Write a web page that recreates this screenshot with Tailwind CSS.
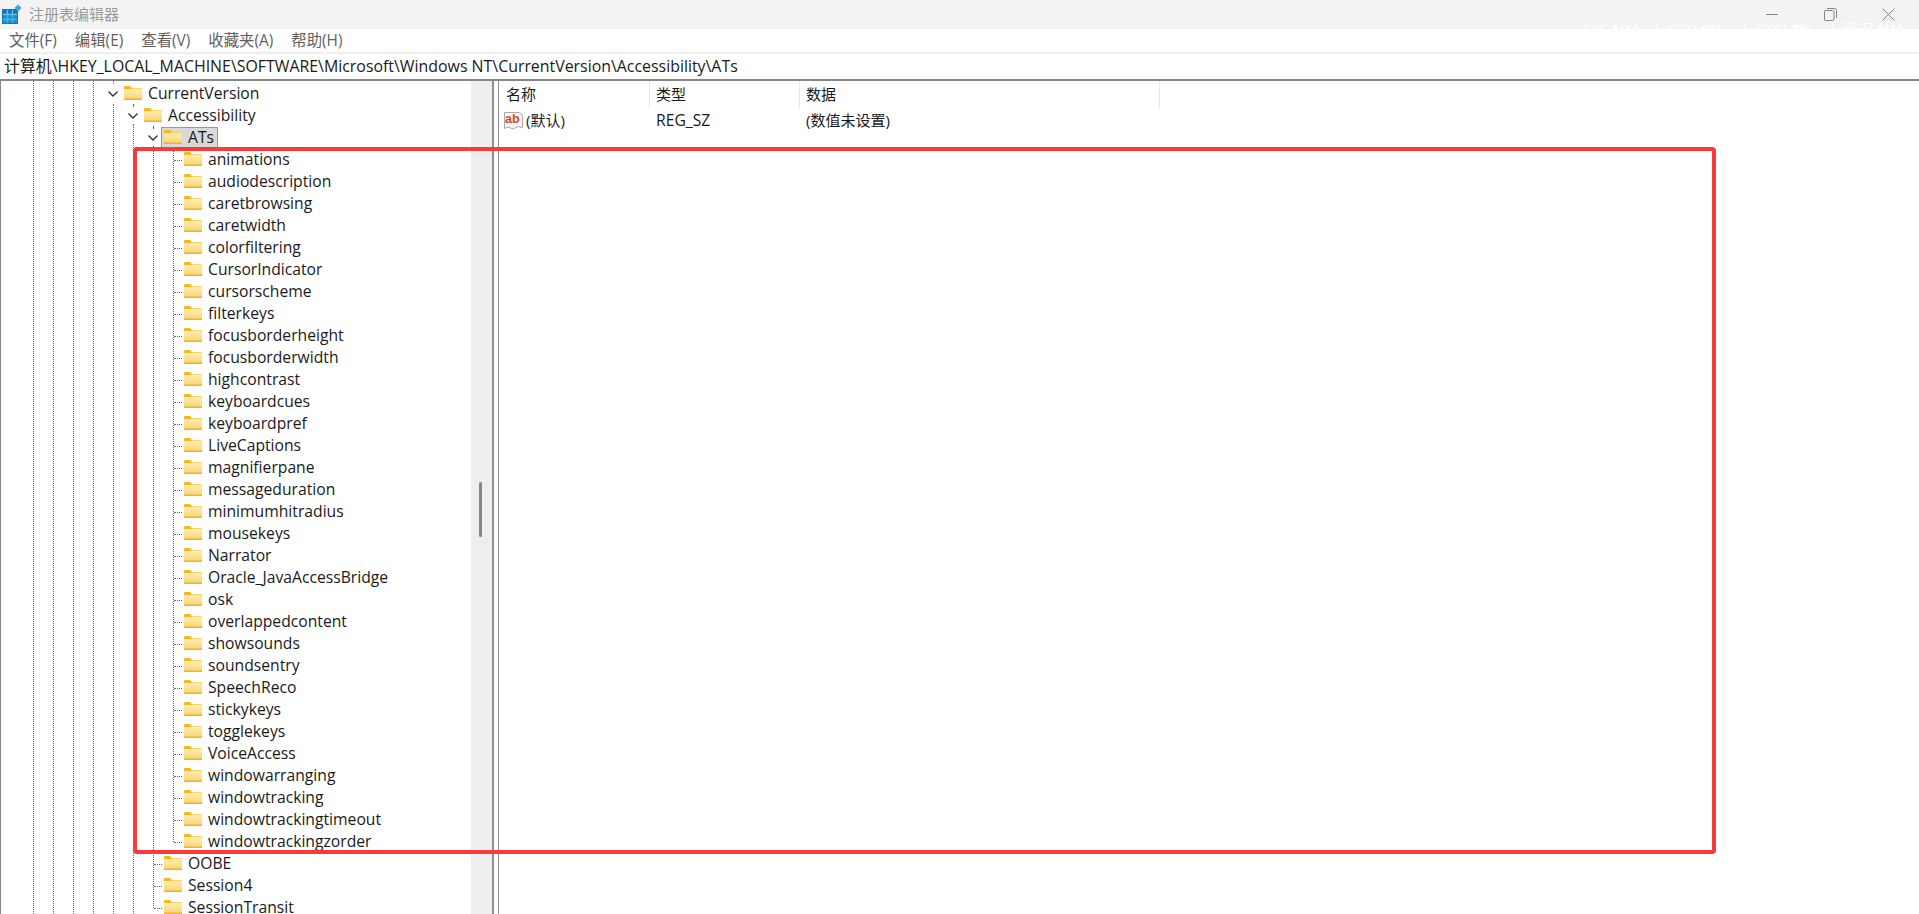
<!DOCTYPE html>
<html lang="zh-CN">
<head>
  <meta charset="UTF-8" />
  <title>注册表编辑器</title>
  <script src="https://cdn.jsdelivr.net/npm/@tailwindcss/browser@4"></script>
</head>
<body class="bg-white text-[#1a1a1a] overflow-hidden font-['Open_Sans','Noto_Sans_CJK_SC',sans-serif]">
  <svg class="absolute h-0 w-0">
    <defs>
      <linearGradient id="fill" x1="0" y1="0" x2="0" y2="1">
        <stop offset="0" stop-color="#fdeeb8"/>
        <stop offset="1" stop-color="#fcd468"/>
      </linearGradient>
    </defs>
    <symbol id="folder" viewBox="0 0 18 14">
      <path d="M0 1 Q0 0 1 0 H6 L8 2 H18 V5 H0Z" fill="#f8b81c"/>
      <path d="M0 3 H7 L8 2.500 H18 V14 H0Z" fill="url(#fill)"/>
      <path d="M0 13.250 H18" stroke="#eeb033" stroke-width="1.500"/>
    </symbol>
  </svg>

  <div class="relative h-[914px] w-[1919px] overflow-hidden">
    <!-- title bar -->
    <div class="relative flex h-[29px] items-center bg-[#f3f3f3]">
      <svg class="ml-[2px] h-[22px] w-[20px]" viewBox="0 0 20 22">
        <rect x="0" y="5" width="16" height="15" fill="#0f78bb"/>
        <path d="M1 10.500H15M1 15.500H15M5.500 6V19M10.500 6V19" stroke="#66c3ee" stroke-width="1.300"/>
        <rect x="1" y="11" width="14" height="8" fill="#2ea3dc" opacity="0.500"/>
        <path d="M16 0.500l3.500 3.500-3.500 3.500-3.500-3.500z" fill="#3aa6d8"/>
      </svg>
      <span class="ml-[7px] text-[15px] text-[#9a9a9a]">注册表编辑器</span>
      <div class="absolute left-[1583px] top-[18px] flex items-center text-[15px] text-white whitespace-nowrap">
        <span class="w-[70px]">FPS <b>N/A</b></span><span class="w-[15px]">|</span>
        <span class="w-[73px]">CPU <b>0%</b></span><span class="w-[15px]">|</span>
        <span class="w-[73px]">GPU <b>7%</b></span><span class="w-[14px]">|</span>
        <span>延迟 <b>N/A</b></span>
      </div>
      <div class="absolute right-0 top-0 mr-[2px] flex h-[29px] text-[#858585]">
        <div class="flex w-[58px] items-center justify-center">
          <svg class="h-[12px] w-[12px]" viewBox="0 0 12 12"><path d="M0 5.500H12" stroke="currentColor"/></svg>
        </div>
        <div class="flex w-[58px] items-center justify-center">
          <svg class="h-[13px] w-[13px]" viewBox="0 0 13 13" fill="none" stroke="currentColor"><rect x="0.500" y="2.500" width="9.500" height="10" rx="1.500"/><path d="M3 0.500H10.500Q12.500 .5 12.500 2.500V10"/></svg>
        </div>
        <div class="flex w-[58px] items-center justify-center">
          <svg class="h-[13px] w-[13px]" viewBox="0 0 13 13" stroke="currentColor"><path d="M0.500 0.500L12.500 12.500M12.500 0.500L0.500 12.500"/></svg>
        </div>
      </div>
    </div>

    <!-- menu -->
    <div class="flex h-[23px] items-center pl-[9px] text-[15.4px] text-[#5f5f5f]">
      <span class="mr-[18px]">文件(F)</span>
      <span class="mr-[18px]">编辑(E)</span>
      <span class="mr-[18px]">查看(V)</span>
      <span class="mr-[18px]">收藏夹(A)</span>
      <span>帮助(H)</span>
    </div>
    <div class="h-[2px] bg-[#f0f0f0]"></div>

    <!-- address bar -->
    <div class="flex h-[25px] items-center pl-[4px] text-[15.9px] leading-none">计算机\HKEY_LOCAL_MACHINE\SOFTWARE\Microsoft\Windows NT\CurrentVersion\Accessibility\ATs</div>
    <div class="h-[2px] bg-[#83868b]"></div>

    <div class="flex h-[833px]">
      <!-- tree -->
      <div class="relative w-[492px] shrink-0 overflow-hidden border-l border-[#83868b] text-[15.7px]">
        <div class="absolute inset-y-0 left-[32px] border-l border-dotted border-[#666]"></div>
        <div class="absolute inset-y-0 left-[52px] border-l border-dotted border-[#666]"></div>
        <div class="absolute inset-y-0 left-[72px] border-l border-dotted border-[#666]"></div>
        <div class="absolute inset-y-0 left-[92px] border-l border-dotted border-[#666]"></div>
        <div class="absolute top-0 left-[112px] h-[3px] border-l border-dotted border-[#666]"></div>
        <div class="absolute top-[23px] left-[112px] bottom-0 border-l border-dotted border-[#666]"></div>
        <div class="absolute top-[23px] left-[132px] h-[2px] border-l border-dotted border-[#666]"></div>
        <div class="absolute top-[43px] left-[132px] bottom-0 border-l border-dotted border-[#666]"></div>
        <div class="absolute top-[45px] left-[152px] h-[2px] border-l border-dotted border-[#666]"></div>
        <div class="absolute top-[65px] left-[152px] h-[762px] border-l border-dotted border-[#666]"></div>
        <div class="absolute top-[67px] left-[172px] h-[694px] border-l border-dotted border-[#666]"></div>

        <div class="relative pt-[2px]">
          <div class="flex h-[22px] items-center pl-[106px]">
            <svg class="mb-[2px] mr-[5px] h-[12px] w-[12px]" viewBox="0 0 12 12" fill="none" stroke="#333" stroke-width="1.400"><path d="M1.500 4.500L6 9L10.500 4.500"/></svg>
            <svg class="mb-[2px] mr-[6px] h-[14px] w-[18px]"><use href="#folder"/></svg>CurrentVersion
          </div>
          <div class="flex h-[22px] items-center pl-[126px]">
            <svg class="mb-[2px] mr-[5px] h-[12px] w-[12px]" viewBox="0 0 12 12" fill="none" stroke="#333" stroke-width="1.400"><path d="M1.500 4.500L6 9L10.500 4.500"/></svg>
            <svg class="mb-[2px] mr-[6px] h-[14px] w-[18px]"><use href="#folder"/></svg>Accessibility
          </div>
          <div class="flex h-[22px] items-center pl-[146px]">
            <svg class="mb-[2px] mr-[2px] h-[12px] w-[12px]" viewBox="0 0 12 12" fill="none" stroke="#333" stroke-width="1.400"><path d="M1.500 4.500L6 9L10.500 4.500"/></svg>
            <div class="flex h-[22px] items-center border border-[#999] bg-[#d9d9d9] pl-[2px] pr-[3px]">
              <svg class="mb-[2px] mr-[6px] h-[14px] w-[18px]"><use href="#folder"/></svg>ATs
            </div>
          </div>

          <div id="children"></div>

          <div class="flex h-[22px] items-center pl-[153px]"><span class="mr-[2px] w-[8px] border-t border-dotted border-[#666]"></span><svg class="mb-[2px] mr-[6px] h-[14px] w-[18px]"><use href="#folder"/></svg>OOBE</div>
          <div class="flex h-[22px] items-center pl-[153px]"><span class="mr-[2px] w-[8px] border-t border-dotted border-[#666]"></span><svg class="mb-[2px] mr-[6px] h-[14px] w-[18px]"><use href="#folder"/></svg>Session4</div>
          <div class="flex h-[22px] items-center pl-[153px]"><span class="mr-[2px] w-[8px] border-t border-dotted border-[#666]"></span><svg class="mb-[2px] mr-[6px] h-[14px] w-[18px]"><use href="#folder"/></svg>SessionTransit</div>
        </div>

        <!-- scrollbar -->
        <div class="absolute inset-y-0 right-0 w-[21px] bg-[#eeeeee]">
          <div class="ml-[8px] mt-[401px] h-[55px] w-[3px] rounded-sm bg-[#858585]"></div>
        </div>
      </div>

      <div class="w-[7px] shrink-0 border-l-2 border-r border-[#8d8f94]"></div>

      <!-- values -->
      <div class="min-w-0 flex-1 pl-[1px] text-[15px]">
        <div class="flex h-[27px] items-center">
          <div class="flex h-full w-[150px] items-center border-r border-[#e5e5e5] pl-[6px]">名称</div>
          <div class="flex h-full w-[150px] items-center border-r border-[#e5e5e5] pl-[6px]">类型</div>
          <div class="flex h-full w-[360px] items-center border-r border-[#e5e5e5] pl-[6px]">数据</div>
        </div>
        <div class="flex h-[25px] items-center">
          <div class="flex w-[150px] items-center pl-[4px]">
            <svg class="mr-[3px] h-[19px] w-[19px]" viewBox="0 0 19 19">
              <path d="M0.500 1.500H15L18.500 4V17L14 15.500L9 18L4 16L.5 17.500Z" fill="#f4f4f4" stroke="#aaa"/>
              <text x="1" y="12" font-size="12.500" font-weight="700" fill="#d2492a" font-family="Liberation Sans">ab</text>
            </svg>
            (默认)
          </div>
          <div class="w-[150px] pl-[6px] text-[15.7px]">REG_SZ</div>
          <div class="pl-[6px]">(数值未设置)</div>
        </div>
      </div>
    </div>

    <!-- red highlight box -->
    <div class="absolute left-[133px] top-[147px] h-[707px] w-[1583px] rounded-[4px] border-4 border-[#f73b3b]"></div>
  </div>

  <script>
    // children of ATs, classes stay literal so tailwind can see them
    var names = ["animations","audiodescription","caretbrowsing","caretwidth","colorfiltering","CursorIndicator","cursorscheme","filterkeys","focusborderheight","focusborderwidth","highcontrast","keyboardcues","keyboardpref","LiveCaptions","magnifierpane","messageduration","minimumhitradius","mousekeys","Narrator","Oracle_JavaAccessBridge","osk","overlappedcontent","showsounds","soundsentry","SpeechReco","stickykeys","togglekeys","VoiceAccess","windowarranging","windowtracking","windowtrackingtimeout","windowtrackingzorder"];
    document.getElementById("children").innerHTML = names.map(function (n) {
      return '<div class="flex h-[22px] items-center pl-[173px]"><span class="mr-[2px] w-[8px] border-t border-dotted border-[#666]"></span><svg class="mb-[2px] mr-[6px] h-[14px] w-[18px]"><use href="#folder"/></svg>' + n + '</div>';
    }).join("");
  </script>
</body>
</html>
